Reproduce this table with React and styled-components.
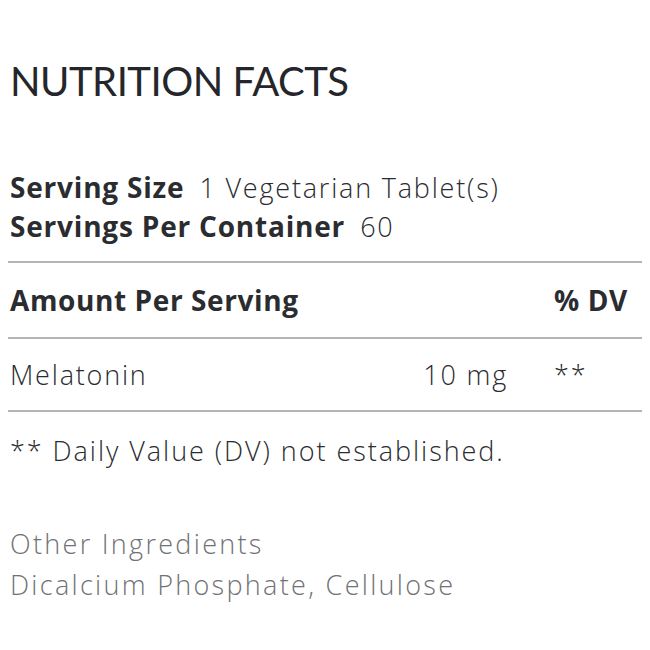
import React from 'react';
import styled, { createGlobalStyle } from 'styled-components';

const GlobalStyle = createGlobalStyle`
  body {
    margin: 0;
    background: #fff;
    font-family: "Open Sans", Lato, sans-serif;
    color: #2a2c30;
  }
`;

const facts = {
  servingSize: '1 Vegetarian Tablet(s)',
  servings: '60',
  rows: [{ name: 'Melatonin', amount: '10 mg', dv: '**' }],
  note: '** Daily Value (DV) not established.',
  other: 'Dicalcium Phosphate, Cellulose',
};

const App = () => (
  <>
    <GlobalStyle />
    <Panel>
      <Title>NUTRITION FACTS</Title>
      <Serving>
        <ServingLine>
          <Label>Serving Size</Label>
          <span>{facts.servingSize}</span>
        </ServingLine>
        <ServingLine>
          <Label>Servings Per Container</Label>
          <span>{facts.servings}</span>
        </ServingLine>
      </Serving>
      <Table>
        <Row $head>
          <Cell>Amount Per Serving</Cell>
          <Cell />
          <Cell>% DV</Cell>
        </Row>
        {facts.rows.map((r) => (
          <Row key={r.name}>
            <Cell>{r.name}</Cell>
            <Cell>{r.amount}</Cell>
            <Cell>{r.dv}</Cell>
          </Row>
        ))}
      </Table>
      <Note>{facts.note}</Note>
      <Other>
        <div>Other Ingredients</div>
        <div>{facts.other}</div>
      </Other>
    </Panel>
  </>
);

const Panel = styled.div({
  width: 634,
  padding: '0 0 0 8px',
  boxSizing: 'content-box',
});

const Title = styled.h1({
  margin: 0,
  paddingTop: 60,
  paddingLeft: 2,
  fontFamily: 'Lato, "Open Sans", sans-serif',
  fontSize: 40,
  fontWeight: 400,
  letterSpacing: -0.5,
  lineHeight: '42px',
  color: '#24262b',
});

const Serving = styled.div({
  marginTop: 66,
  paddingLeft: 2,
  paddingBottom: 15,
  borderBottom: '2px solid #b4b4b4',
  fontSize: 27,
  fontWeight: 300,
  letterSpacing: 1.8,
});

const ServingLine = styled.div({
  lineHeight: '38px',
});

const Label = styled.span({
  fontSize: 28,
  fontWeight: 700,
  letterSpacing: 0.8,
  marginRight: 15,
});

const Table = styled.div({});

const Row = styled.div(({ $head }) => ({
  display: 'grid',
  gridTemplateColumns: '1fr 140px 88px',
  alignItems: 'center',
  height: $head ? 74 : 71,
  borderBottom: '2px solid #b4b4b4',
  paddingLeft: 2,
  fontSize: $head ? 28 : 27,
  fontWeight: $head ? 700 : 300,
  letterSpacing: $head ? 0.6 : 1.8,
  '& > :nth-child(2)': { textAlign: 'right', paddingRight: 46 },
}));

const Cell = styled.div({});

const Note = styled.div({
  marginTop: 20,
  paddingLeft: 2,
  fontSize: 27,
  fontWeight: 300,
  letterSpacing: 1.95,
  lineHeight: '38px',
});

const Other = styled.div({
  marginTop: 53,
  paddingLeft: 2,
  fontSize: 27,
  fontWeight: 300,
  letterSpacing: 2.3,
  lineHeight: '41px',
  color: '#707276',
});

export default App;
